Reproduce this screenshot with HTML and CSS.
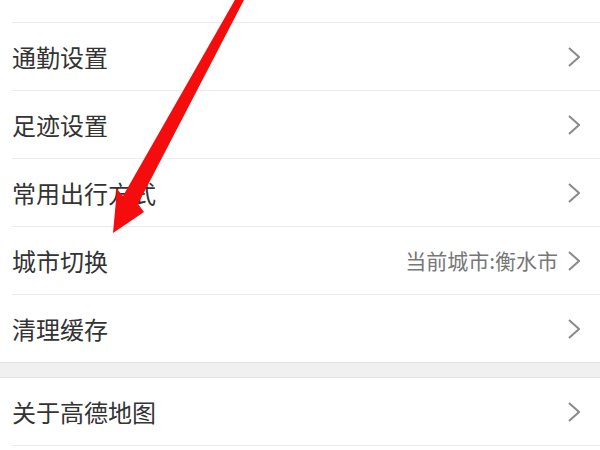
FILE: index.html
```html
<!DOCTYPE html>
<html lang="zh-CN">
<head>
<meta charset="utf-8">
<title>设置</title>
<link rel="stylesheet" href="styles.css">
</head>
<body>
<div class="page">
  <div class="group first">
    <div class="row top"><span class="label">消息推送设置</span><svg class="chev" viewBox="0 0 12 20"><polyline points="1,1 11,10 1,19"/></svg></div>
    <div class="row"><span class="label">通勤设置</span><svg class="chev" viewBox="0 0 12 20"><polyline points="1,1 11,10 1,19"/></svg></div>
    <div class="row"><span class="label">足迹设置</span><svg class="chev" viewBox="0 0 12 20"><polyline points="1,1 11,10 1,19"/></svg></div>
    <div class="row"><span class="label">常用出行方式</span><svg class="chev" viewBox="0 0 12 20"><polyline points="1,1 11,10 1,19"/></svg></div>
    <div class="row"><span class="label">城市切换</span><span class="value">当前城市:衡水市</span><svg class="chev" viewBox="0 0 12 20"><polyline points="1,1 11,10 1,19"/></svg></div>
    <div class="row last"><span class="label">清理缓存</span><svg class="chev" viewBox="0 0 12 20"><polyline points="1,1 11,10 1,19"/></svg></div>
  </div>
  <div class="gap"></div>
  <div class="group">
    <div class="row"><span class="label">关于高德地图</span><svg class="chev" viewBox="0 0 12 20"><polyline points="1,1 11,10 1,19"/></svg></div>
  </div>
</div>
<svg class="arrow" viewBox="0 0 600 450" width="600" height="450">
  <polygon points="236,-2 245,-2 138,204 144,212 113,233 117,189 123,196"/>
</svg>
</body>
</html>
```
FILE: styles.css
```css
html, body {
  margin: 0;
  padding: 0;
  background: #ffffff;
}
body {
  width: 600px;
  height: 450px;
  overflow: hidden;
  position: relative;
  font-family: "Noto Sans CJK SC", "Noto Sans", sans-serif;
}
.page {
  display: flex;
  flex-direction: column;
}
.group.first {
  margin-top: -45px;
}
.row {
  height: 67px;
  margin-left: 12px;
  padding-right: 20px;
  border-bottom: 1px solid #ececec;
  display: flex;
  align-items: center;
}
.row.top {
  align-items: flex-start;
  padding-top: 15px;
  height: 52px;
}
.row.last {
  border-bottom: none;
}
.label {
  flex: 1;
  font-size: 24px;
  color: #333333;
  line-height: 1;
}
.value {
  font-size: 21px;
  color: #777777;
  margin-right: 10px;
  line-height: 1;
}
.chev {
  width: 12px;
  height: 20px;
  fill: none;
  stroke: #8a8a8a;
  stroke-width: 2;
}
.gap {
  height: 14px;
  background: #f0f0f0;
  border-top: 1px solid #e2e2e2;
  border-bottom: 1px solid #e2e2e2;
}
.arrow {
  position: absolute;
  left: 0;
  top: 0;
  pointer-events: none;
}
.arrow polygon {
  fill: #f50d0d;
}
```
